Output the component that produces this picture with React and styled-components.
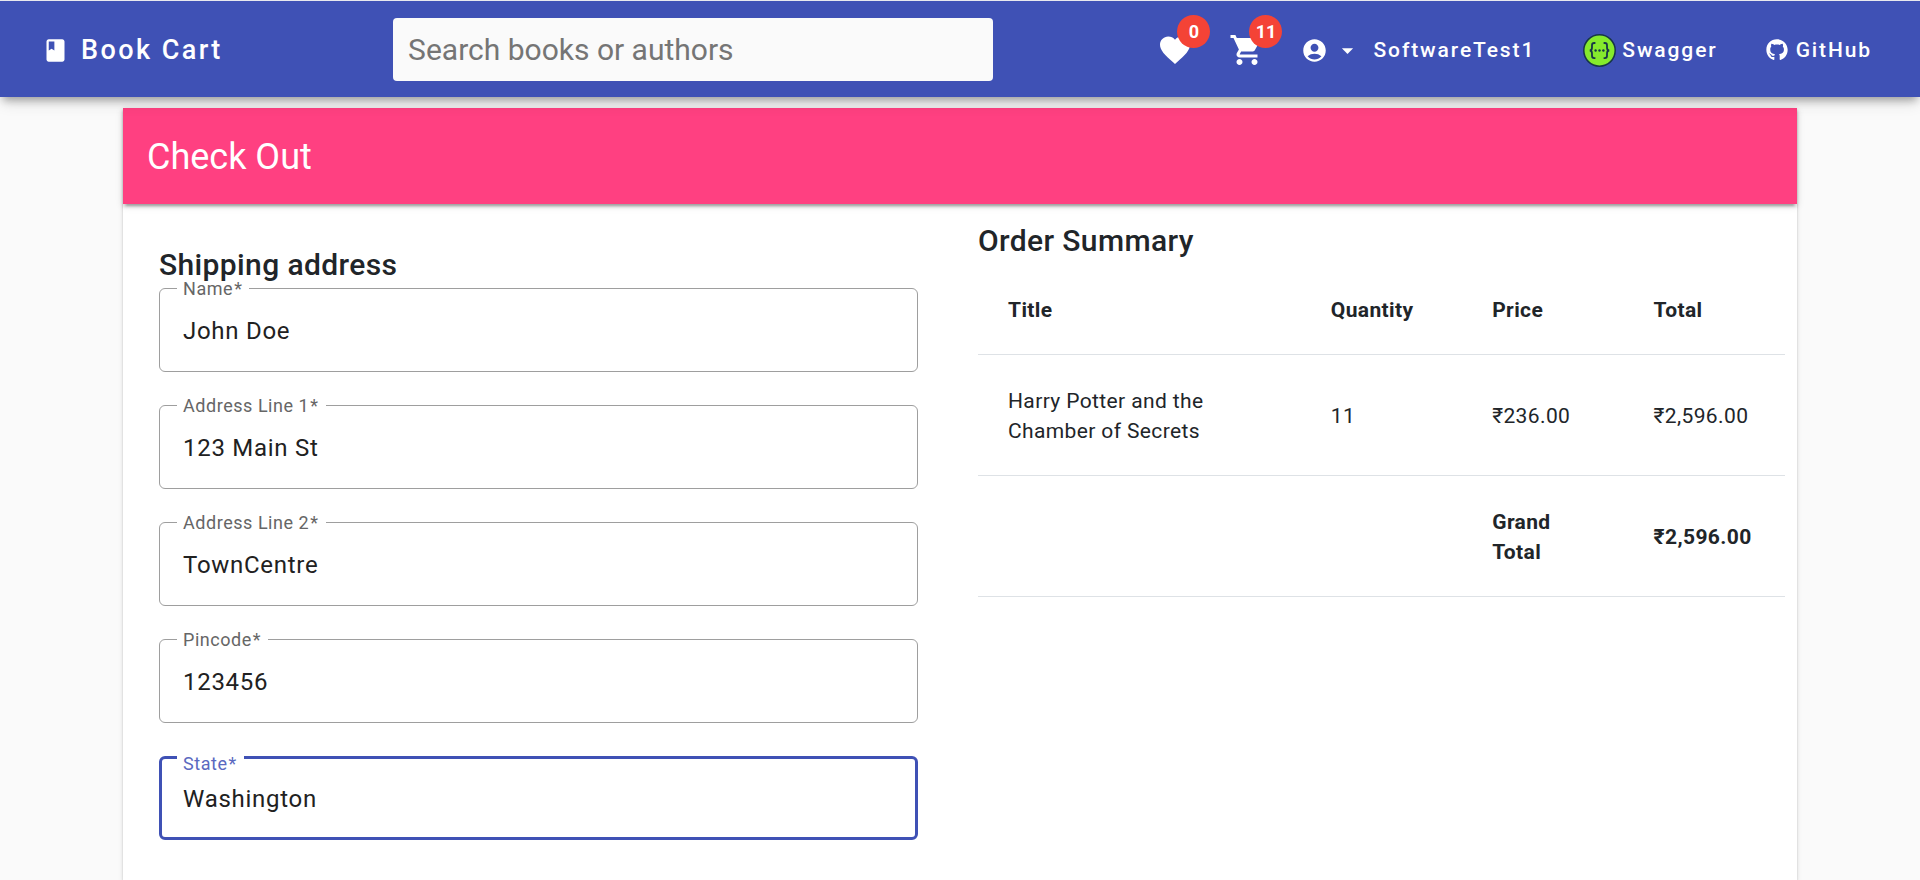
import React, { useId } from "react";
import styled, { createGlobalStyle } from "styled-components";
import {
  MdBook,
  MdFavorite,
  MdShoppingCart,
  MdAccountCircle,
  MdArrowDropDown,
} from "react-icons/md";
import { FaGithub } from "react-icons/fa";

const GlobalStyle = createGlobalStyle`
  *, *::before, *::after { box-sizing: border-box; }
  html, body { margin: 0; }
  body {
    background: #fafafa;
    color: #212529;
    font-family: Roboto, "Liberation Sans", sans-serif;
    font-size: 21px;
    line-height: 30px;
  }
`;

const Page = styled.div`
  min-height: 100vh;
  overflow: hidden;
  border-top: 1px solid #e8e8ee;
`;

const AppBar = styled.header`
  position: relative;
  z-index: 2;
  display: flex;
  align-items: center;
  justify-content: space-between;
  height: 96px;
  padding: 0 24px;
  background: #3f51b5;
  box-shadow: 0 6px 8px -3px rgba(0, 0, 0, 0.3),
    0 8px 14px -2px rgba(0, 0, 0, 0.12);
`;

const NavGroup = styled.nav`
  display: flex;
  align-items: center;
  padding-top: 2px;
`;

const NavLink = styled.a`
  display: inline-flex;
  align-items: center;
  gap: ${(p) => p.$gap || 6}px;
  padding: 0 24px;
  color: #fff;
  font-size: ${(p) => (p.$brand ? 27 : 21)}px;
  font-weight: 500;
  letter-spacing: 0.09em;
  text-decoration: none;
  white-space: nowrap;
`;

const Brand = styled(NavLink)`
  padding: 2px 24px 0 18px;
`;

const UserButton = styled.button`
  display: inline-flex;
  align-items: center;
  gap: 6px;
  padding: 0 24px 0 18px;
  border: 0;
  background: none;
  color: #fff;
  font: 500 21px/30px Roboto, "Liberation Sans", sans-serif;
  letter-spacing: 0.09em;
  white-space: nowrap;
`;

const UserName = styled.span`
  padding-left: 6px;
`;

const IconButton = styled.button`
  display: flex;
  align-items: center;
  justify-content: center;
  width: 72px;
  height: 72px;
  padding: 0;
  border: 0;
  background: none;
  color: #fff;
`;

const BadgeAnchor = styled.span`
  position: relative;
  display: flex;
`;

const Badge = styled.span`
  position: absolute;
  left: 20px;
  bottom: 20px;
  width: 33px;
  height: 33px;
  border-radius: 50%;
  background: #f44336;
  color: #fff;
  font: 700 18px/33px Roboto, "Liberation Sans", sans-serif;
  text-align: center;
`;

const SearchBox = styled.input`
  flex: 0 1 600px;
  min-width: 0;
  height: 63px;
  padding: 0 15px;
  border: 0;
  border-radius: 4px;
  background: #fafafa;
  color: #212529;
  font: 400 30px/36px Roboto, "Liberation Sans", sans-serif;
  &::placeholder { color: #757575; opacity: 1; }
`;

const Container = styled.main`
  max-width: 1710px;
  margin: 0 auto;
  padding: 11px 18px 0;
`;

const Card = styled.section`
  min-height: calc(100vh - 108px);
  background: #fff;
  box-shadow: 0 3px 2px -2px rgba(0, 0, 0, 0.2),
    0 2px 2px 0 rgba(0, 0, 0, 0.14), 0 2px 5px 0 rgba(0, 0, 0, 0.12);
`;

const CardBar = styled.div`
  display: flex;
  align-items: center;
  height: 96px;
  padding: 2px 24px 0;
  background: #ff4081;
  color: #fff;
  box-shadow: 0 5px 2px -3px rgba(0, 0, 0, 0.2),
    0 3px 3px 0 rgba(0, 0, 0, 0.14), 0 2px 8px 0 rgba(0, 0, 0, 0.12);
`;

const CardTitle = styled.h1`
  margin: 0;
  font-size: 36px;
  font-weight: 400;
  line-height: 48px;
`;

const Columns = styled.div`
  display: grid;
  grid-template-columns: 1fr 1fr;
`;

const Form = styled.form`
  padding: 43px 42px 33px 36px;
`;

const Heading = styled.h2`
  margin: 0;
  font-size: 30px;
  font-weight: 500;
  line-height: 36px;
  letter-spacing: 0.0125em;
`;

const FormHeading = styled(Heading)`
  padding-bottom: 5px;
`;

const Fields = styled.div`
  display: flex;
  flex-direction: column;
  gap: 33px;
`;

const FieldBox = styled.div`
  position: relative;
  display: flex;
`;

const FieldLabel = styled.label`
  position: absolute;
  left: 18px;
  top: ${(p) => (p.$active ? -1 : -6)}px;
  padding: 0 6px;
  background: #fff;
  color: ${(p) => (p.$active ? "#5a69c0" : "#666")};
  font-size: 18px;
  line-height: ${(p) => (p.$active ? 18 : 14)}px;
  letter-spacing: 0.03em;
`;

const RequiredMark = styled.span`
  margin: 0 1px;
`;

const FieldInput = styled.input`
  width: 100%;
  height: 84px;
  padding: 2px ${(p) => (p.$active ? 21 : 23)}px 0;
  border: ${(p) => (p.$active ? "3px solid #3f51b5" : "1px solid #9e9e9e")};
  border-radius: 6px;
  outline: 0;
  background: #fff;
  color: #212121;
  font: 400 24px/36px Roboto, "Liberation Sans", sans-serif;
  letter-spacing: 0.03em;
`;

const Summary = styled.div`
  padding: 19px 12px 24px 18px;
`;

const OrderTable = styled.table`
  width: 100%;
  margin-top: 5px;
  border-collapse: collapse;
  table-layout: fixed;
  letter-spacing: 0.018em;
`;

const Cell = styled.td`
  width: ${(p) => (p.$wide ? 40 : 20)}%;
  padding: 31px 30px 29px;
  border-bottom: 1px solid #dee2e6;
  font-weight: ${(p) => (p.$strong ? 700 : 400)};
  text-align: left;
  vertical-align: middle;
`;

const SwaggerLogo = () => (
  <svg width="33" height="33" viewBox="0 0 33 33" aria-hidden="true">
    <circle cx="16.5" cy="16.5" r="15.7" fill="#85ea2d" stroke="#173647" strokeWidth="1.5" />
    <g fill="none" stroke="#173647" strokeWidth="1.8">
      <path d="M12.4 9h-1.2c-1.5 0-2.2.8-2.2 2.2v2.3c0 1.9-.6 3-2.3 3 1.7 0 2.3 1.1 2.3 3v2.3c0 1.500.7 2.300 2.200 2.300h1.200" />
      <path d="M20.6 9h1.2c1.5 0 2.2.8 2.2 2.2v2.3c0 1.9.6 3 2.3 3-1.7 0-2.3 1.1-2.3 3v2.3c0 1.5-.7 2.3-2.2 2.3h-1.2" />
    </g>
    <g fill="#173647">
      <circle cx="12.6" cy="16.5" r="1.2" />
      <circle cx="16.5" cy="16.5" r="1.2" />
      <circle cx="20.4" cy="16.5" r="1.2" />
    </g>
  </svg>
);

function Field({ label, value, active }) {
  const id = useId();
  return (
    <FieldBox>
      <FieldInput id={id} type="text" defaultValue={value} $active={active} />
      <FieldLabel htmlFor={id} $active={active}>
        {label}
        <RequiredMark>*</RequiredMark>
      </FieldLabel>
    </FieldBox>
  );
}

function BadgeButton({ icon: Icon, count, label }) {
  return (
    <IconButton type="button" aria-label={label}>
      <BadgeAnchor>
        <Icon size={36} />
        <Badge>{count}</Badge>
      </BadgeAnchor>
    </IconButton>
  );
}

const fields = [
  { label: "Name", value: "John Doe" },
  { label: "Address Line 1", value: "123 Main St" },
  { label: "Address Line 2", value: "TownCentre" },
  { label: "Pincode", value: "123456" },
  { label: "State", value: "Washington", active: true },
];

const items = [
  {
    title: "Harry Potter and the Chamber of Secrets",
    quantity: 11,
    price: "₹236.00",
    total: "₹2,596.00",
  },
];

export default function App() {
  return (
    <Page>
      <GlobalStyle />
      <AppBar>
        <Brand href="#" $brand $gap={12}>
          <MdBook size={27} />
          Book Cart
        </Brand>
        <SearchBox
          type="search"
          placeholder="Search books or authors"
          aria-label="Search books or authors"
        />
        <NavGroup>
          <BadgeButton icon={MdFavorite} count={0} label="Wishlist" />
          <BadgeButton icon={MdShoppingCart} count={11} label="Cart" />
          <UserButton type="button">
            <MdAccountCircle size={27} />
            <MdArrowDropDown size={27} />
            <UserName>SoftwareTest1</UserName>
          </UserButton>
          <NavLink href="#">
            <SwaggerLogo />
            Swagger
          </NavLink>
          <NavLink href="#" $gap={8}>
            <FaGithub size={22} />
            GitHub
          </NavLink>
        </NavGroup>
      </AppBar>
      <Container>
        <Card>
          <CardBar>
            <CardTitle>Check Out</CardTitle>
          </CardBar>
          <Columns>
            <Form>
              <FormHeading>Shipping address</FormHeading>
              <Fields>
                {fields.map((f) => (
                  <Field key={f.label} {...f} />
                ))}
              </Fields>
            </Form>
            <Summary>
              <Heading>Order Summary</Heading>
              <OrderTable>
                <thead>
                  <tr>
                    <Cell as="th" scope="col" $wide $strong>Title</Cell>
                    <Cell as="th" scope="col" $strong>Quantity</Cell>
                    <Cell as="th" scope="col" $strong>Price</Cell>
                    <Cell as="th" scope="col" $strong>Total</Cell>
                  </tr>
                </thead>
                <tbody>
                  {items.map((item) => (
                    <tr key={item.title}>
                      <Cell>{item.title}</Cell>
                      <Cell>{item.quantity}</Cell>
                      <Cell>{item.price}</Cell>
                      <Cell>{item.total}</Cell>
                    </tr>
                  ))}
                </tbody>
                <tfoot>
                  <tr>
                    <Cell />
                    <Cell />
                    <Cell as="th" scope="row" $strong>Grand Total</Cell>
                    <Cell $strong>₹2,596.00</Cell>
                  </tr>
                </tfoot>
              </OrderTable>
            </Summary>
          </Columns>
        </Card>
      </Container>
    </Page>
  );
}
